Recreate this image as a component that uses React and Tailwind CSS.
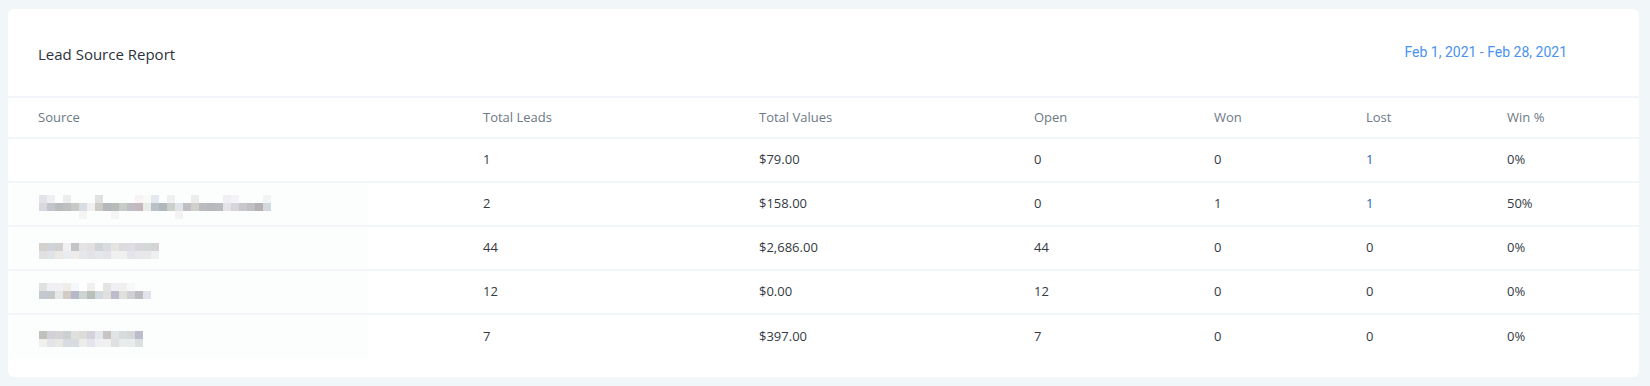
const cols = "grid grid-cols-[445px_276px_275px_180px_152px_141px_1fr]";

const mosaics = [
  null,
  [
    [
      [0, "#e4e4e8"], [1, "#f0f0f4"], [3, "#ececec"], [7, "#e0e0e0"], [12, "#f8f4f4"], [13, "#fafaf4"],
      [14, "#e4e8f0"], [16, "#f0f0f0"], [19, "#ececec"], [23, "#f0f0f4"], [24, "#f4f4f8"], [28, "#f0f4f4"],
    ],
    [
      "#d8d8de", "#c4c4cc", "#b8bcbc", "#bcc0c0", "#c8c8c4", "#d8dde2", "#f0f0f0", "#ccccc4", "#b4b8bc", "#b8bcb8",
      "#c8ccc8", "#c0bcc4", "#c4b8bc", "#e8ece8", "#b8c0c8", "#b0b8bc", "#ccd0cc", "#e0e4e8", "#c0c0c4", "#d0d0c8",
      "#bcbcc0", "#b8b8bc", "#b8bcc0", "#e4e4e8", "#d8d4dc", "#c8c8cc", "#c0c0c4", "#b4b0b4", "#d0d8e0",
    ].map((c, i) => [i, c]),
    [[5, "#f4f4f4"], [9, "#f4f4f4"], [17, "#f4f2f2"]],
  ],
  [
    [
      "#d4d0cc", "#d0d4d8", "#d0d0d0", "#f0f0f0", "#c4c4c8", "#e4e4e4", "#e4e0e0", "#d0d4d4", "#d8dce0", "#e4e4e0",
      "#dcdce0", "#e0dce4", "#d8d8dc", "#d4d8d8", "#d4d4d4",
    ].map((c, i) => [i, c]),
    [
      "#e0e0e0", "#e0e4e8", "#ece8e4", "#e8ecf0", "#f0ecec", "#e4e8ec", "#e4e4e8", "#e4e8ec", "#e4e4e8", "#f0f0f0",
      "#f0f0f0", "#e4e4ec", "#e8e8ec", "#e8e8e8", "#ecf0f0",
    ].map((c, i) => [i, c]),
  ],
  [
    [
      "#e0e0e0", "#f0f0f4", "#f0f0f4", "#f0ece8", "#f4f8fc", "#ffffff", "#f0f0f0", "#ffffff", "#e4e4e4", "#f0f0f4",
      "#f0f0f0", "#f8f8f8",
    ].map((c, i) => [i, c]),
    [
      "#c4c8d0", "#c4c8c8", "#e4e8e8", "#d4ccc4", "#b4b8c8", "#ccd4d4", "#b8c0b8", "#d4d8e0", "#e0e0dc", "#bcbccc",
      "#e0e0dc", "#d0d0d4", "#bcbcc0", "#e0e4e8",
    ].map((c, i) => [i, c]),
  ],
  [
    [
      "#c0c0bc", "#d4d0d8", "#d4d4d4", "#ccd0d0", "#e0e0dc", "#dcdcd8", "#d4d0dc", "#e4e8ec", "#c8c4c4", "#e0e4e4",
      "#d8dcdc", "#d4d8d8", "#bcbccc",
    ].map((c, i) => [i, c]),
    [
      "#f0f0ec", "#e4e4e8", "#e8e8e4", "#d8dce0", "#d8dce0", "#ecece8", "#e4e4ec", "#f0f0f4", "#f0f0f0", "#e0e0e0",
      "#e8ecec", "#e8ecec", "#dce0e0",
    ].map((c, i) => [i, c]),
  ],
];

// vertical nudge of each blurred name inside its row
const nudge = ["", "mt-[6px]", "mt-[5px]", "-mt-[3px]", "mt-[4px]"];

const rows = [
  { leads: "1", value: "$79.00", open: "0", won: "0", lost: "1", win: "0%", lostLink: true },
  { leads: "2", value: "$158.00", open: "0", won: "1", lost: "1", win: "50%", lostLink: true },
  { leads: "44", value: "$2,686.00", open: "44", won: "0", lost: "0", win: "0%" },
  { leads: "12", value: "$0.00", open: "12", won: "0", lost: "0", win: "0%" },
  { leads: "7", value: "$397.00", open: "7", won: "0", lost: "0", win: "0%" },
];

function Mosaic({ lines }) {
  const width = Math.max(...lines.flat().map(([i]) => i + 1)) * 8;
  return (
    <svg width={width} height={lines.length * 8} className="block">
      {lines.map((line, y) =>
        line.map(([x, fill]) => <rect key={`${y}-${x}`} x={x * 8} y={y * 8} width="8" height="8" fill={fill} />)
      )}
    </svg>
  );
}

export default function App() {
  return (
    <div className="min-h-[386px] bg-[#f1f6f9] pl-[8px] pr-[11px] pt-[9px] pb-[9px] font-['Open_Sans',sans-serif]">
      <div className="bg-white rounded-[6px] h-[368px]">
        <div className="h-[87px] flex items-center justify-between pl-[30px] pr-[72px] pt-[4px]">
          <h2 className="text-[15px] text-[#2b323c]">Lead Source Report</h2>
          <span className="text-[14px] text-[#4a92ef] font-['Roboto',sans-serif] -mt-[4px]">
            Feb 1, 2021 - Feb 28, 2021
          </span>
        </div>
        <div className={`${cols} h-[43px] items-center border-y-2 border-[#f2f6fa] text-[13px] text-[#6d7885]`}>
          <div className="pl-[30px]">Source</div>
          <div className="pl-[30px]">Total Leads</div>
          <div className="pl-[30px]">Total Values</div>
          <div className="pl-[30px]">Open</div>
          <div className="pl-[30px]">Won</div>
          <div className="pl-[30px]">Lost</div>
          <div className="pl-[30px]">Win %</div>
        </div>
        {rows.map((r, i) => (
          <div
            key={i}
            className={`${cols} h-[44px] items-center text-[13px] text-[#333a44] ${
              i < rows.length - 1 ? "border-b-2 border-[#f2f6fa]" : ""
            }`}
          >
            <div className="pl-[3px] h-full">
              <div className={`w-[357px] h-full pl-[28px] flex items-center ${i > 0 ? "bg-[#fcfdfd]" : ""}`}>
                {mosaics[i] && (
                  <div className={nudge[i]}>
                    <Mosaic lines={mosaics[i]} />
                  </div>
                )}
              </div>
            </div>
            <div className="pl-[30px]">{r.leads}</div>
            <div className="pl-[30px]">{r.value}</div>
            <div className="pl-[30px]">{r.open}</div>
            <div className="pl-[30px]">{r.won}</div>
            <div className={`pl-[30px] ${r.lostLink ? "text-[#2668b5]" : ""}`}>{r.lost}</div>
            <div className="pl-[30px]">{r.win}</div>
          </div>
        ))}
      </div>
    </div>
  );
}
